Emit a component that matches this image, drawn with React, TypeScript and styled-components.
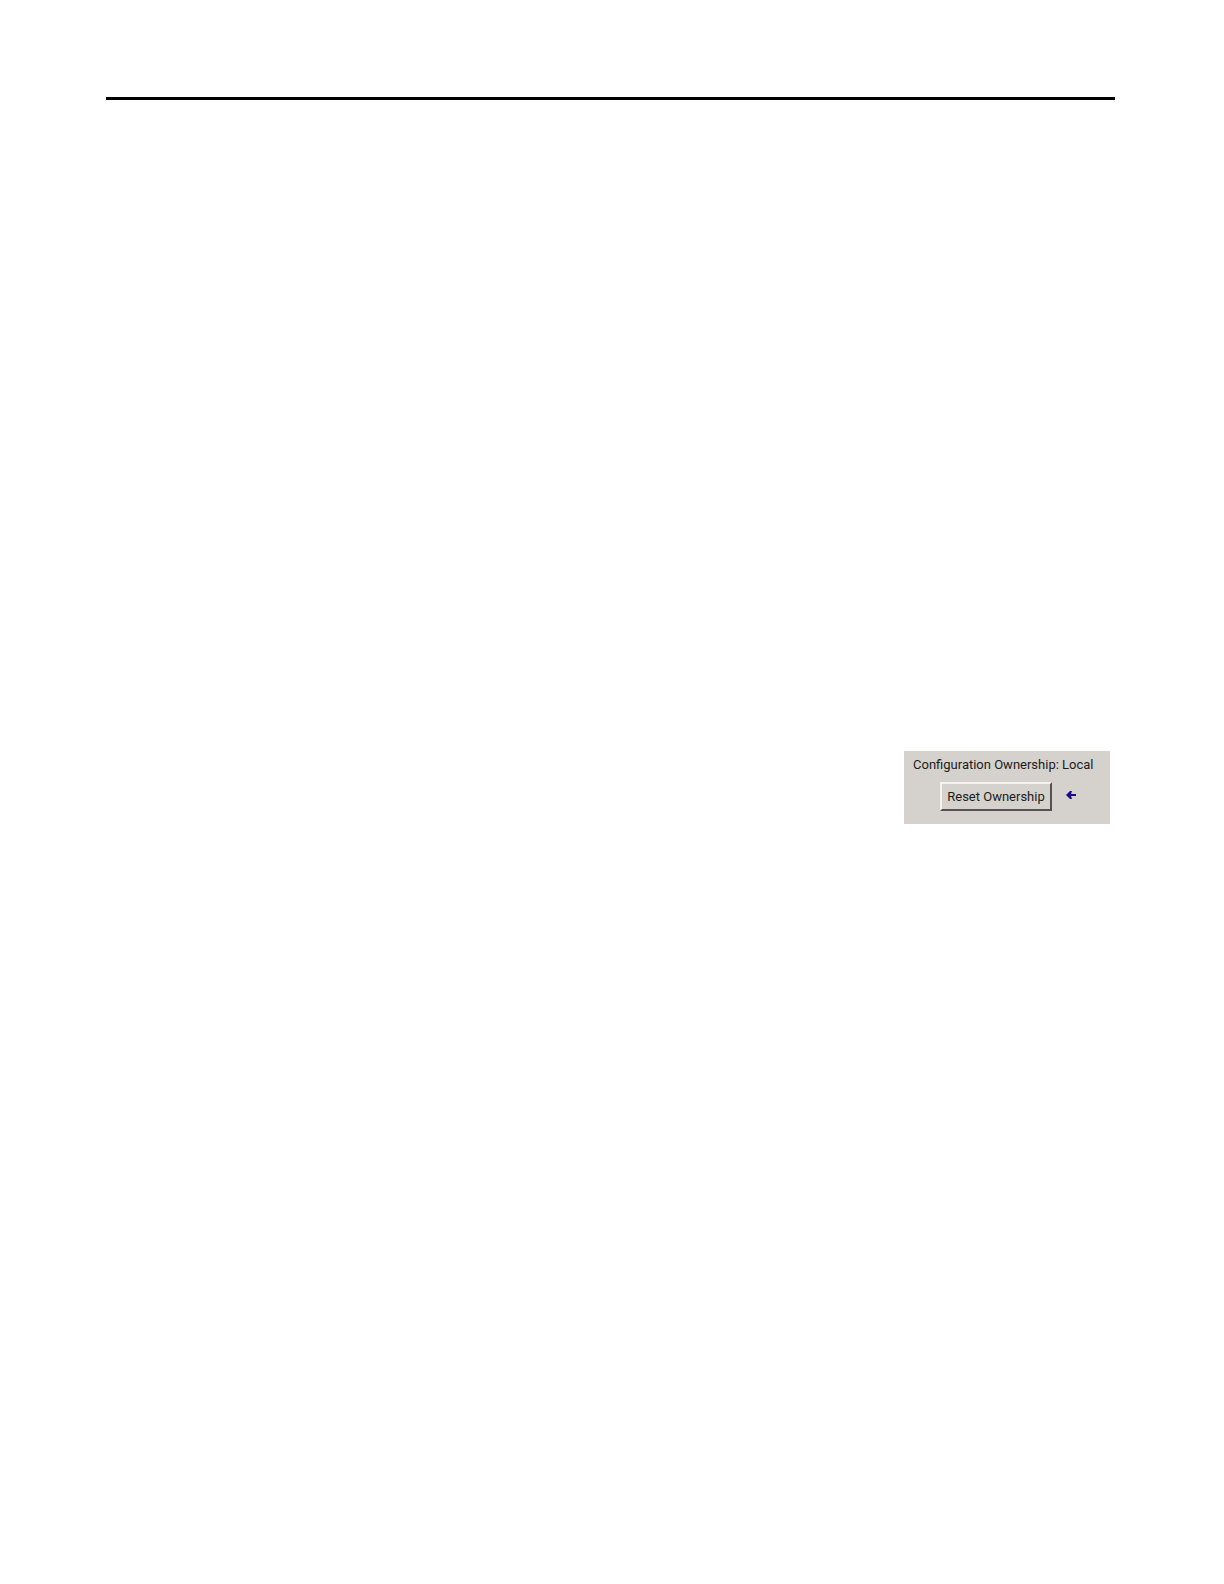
import React from "react";
import styled, { createGlobalStyle } from "styled-components";

const uiFont = `Roboto, "Liberation Sans", Arial, sans-serif`;

const GlobalStyle = createGlobalStyle`
  *, *::before, *::after { box-sizing: border-box; }
  body {
    margin: 0;
    background: #ffffff;
    color: #1c1c1c;
    font-family: ${uiFont};
  }
`;

const Page = styled.main`
  min-height: 100vh;
  padding: 97px 109px 96px 106px;
`;

const Rule = styled.hr`
  height: 3px;
  margin: 0;
  border: 0;
  background: #000000;
`;

const Content = styled.div`
  display: flex;
  justify-content: flex-end;
  padding: 651px 5px 0 0;
`;

const Panel = styled.section`
  display: flex;
  flex-direction: column;
  gap: 8px;
  width: 206px;
  padding: 5px 9px 13px;
  background: #d5d2cd;
`;

const Status = styled.p`
  margin: 0;
  font-size: 13px;
  line-height: 18px;
  white-space: nowrap;
`;

const Actions = styled.div`
  display: flex;
  align-items: center;
  gap: 14px;
  padding-left: 27px;
`;

const ResetButton = styled.button`
  width: 112px;
  height: 29px;
  padding: 0;
  border: 2px solid;
  border-color: #f4f3f0 #55534f #55534f #f4f3f0;
  border-radius: 0;
  background: #d5d2cd;
  color: inherit;
  font: 13px/18px ${uiFont};
  white-space: nowrap;
`;

const Arrow = styled.svg`
  display: block;
  flex: none;
  margin-bottom: 4px;
`;

function ChangeArrow() {
  return (
    <Arrow width="10" height="10" viewBox="0 0 10 10" aria-hidden="true">
      <path d="M0 5L4 1H6L5 4H10V6H5L6 9H4Z" fill="#160c92" />
    </Arrow>
  );
}

export default function App() {
  return (
    <>
      <GlobalStyle />
      <Page>
        <Rule />
        <Content>
          <Panel>
            <Status>Configuration Ownership: Local</Status>
            <Actions>
              <ResetButton type="button">Reset Ownership</ResetButton>
              <ChangeArrow />
            </Actions>
          </Panel>
        </Content>
      </Page>
    </>
  );
}
